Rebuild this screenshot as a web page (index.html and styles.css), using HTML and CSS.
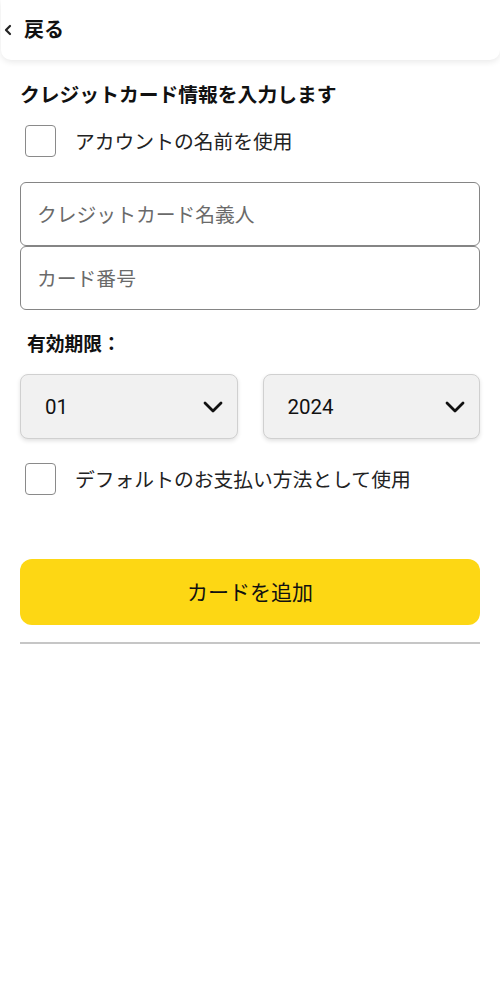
FILE: index.html
```html
<!DOCTYPE html>
<html lang="ja">
<head>
<meta charset="utf-8">
<link rel="stylesheet" href="styles.css">
</head>
<body>
<header class="topbar">
  <svg class="back-icon" width="8" height="12" viewBox="0 0 8 12"><path d="M6 2 L2 6 L6 10" fill="none" stroke="#222" stroke-width="2.2" stroke-linecap="round" stroke-linejoin="round"/></svg>
  <span class="back-text">戻る</span>
</header>
<main class="content">
  <h1 class="title">クレジットカード情報を入力します</h1>
  <label class="check-row">
    <span class="checkbox"></span>
    <span class="check-label">アカウントの名前を使用</span>
  </label>
  <div class="inputs">
    <div class="field">クレジットカード名義人</div>
    <div class="field field-second">カード番号</div>
  </div>
  <div class="subtitle">有効期限：</div>
  <div class="selects">
    <div class="select">
      <span class="select-value">01</span>
      <svg class="chev" width="20" height="12" viewBox="0 0 20 12"><path d="M2 2 L10 10 L18 2" fill="none" stroke="#111" stroke-width="2.8" stroke-linecap="round" stroke-linejoin="round"/></svg>
    </div>
    <div class="select">
      <span class="select-value">2024</span>
      <svg class="chev" width="20" height="12" viewBox="0 0 20 12"><path d="M2 2 L10 10 L18 2" fill="none" stroke="#111" stroke-width="2.8" stroke-linecap="round" stroke-linejoin="round"/></svg>
    </div>
  </div>
  <label class="check-row check-row-2">
    <span class="checkbox"></span>
    <span class="check-label">デフォルトのお支払い方法として使用</span>
  </label>
  <button class="add-btn">カードを追加</button>
  <div class="divider"></div>
</main>
</body>
</html>
```
FILE: styles.css
```css
html, body {
  margin: 0;
  padding: 0;
  background: #fff;
}
body {
  font-family: "Noto Sans CJK JP", "Noto Sans", sans-serif;
  color: #222;
}
.topbar {
  height: 60px;
  margin-left: 1px;
  background: #fff;
  border-radius: 0 0 10px 10px;
  box-shadow: 0 2px 6px rgba(0, 0, 0, 0.09);
  display: flex;
  align-items: center;
  padding-left: 3px;
  box-sizing: border-box;
}
.back-icon {
  display: block;
  margin-right: 12px;
}
.back-text {
  font-size: 20px;
  font-weight: 700;
  color: #111;
  line-height: 1;
  padding-bottom: 2px;
}
.content {
  padding: 0 20px;
}
.title {
  margin: 20px 0 0 0;
  font-size: 19.8px;
  line-height: 28px;
  font-weight: 700;
  color: #111;
}
.check-row {
  display: flex;
  align-items: center;
  margin-top: 17px;
  margin-left: 5px;
}
.checkbox {
  width: 31px;
  height: 32px;
  box-sizing: border-box;
  border: 1.5px solid #8a8a8a;
  border-radius: 4px;
  flex: none;
}
.check-label {
  margin-left: 19px;
  font-size: 19.8px;
  line-height: 28px;
  color: #222;
}
.inputs {
  margin-top: 25px;
}
.field {
  height: 64px;
  box-sizing: border-box;
  border: 1.5px solid #858585;
  border-radius: 6px;
  padding-left: 16px;
  display: flex;
  align-items: center;
  font-size: 19.8px;
  color: #6a6a6a;
  padding-bottom: 2px;
}
.field-second {
  margin-top: 0;
}
.subtitle {
  margin: 20px 0 0 7px;
  font-size: 18.8px;
  line-height: 26px;
  font-weight: 700;
  color: #111;
}
.selects {
  display: grid;
  grid-template-columns: 1fr 1fr;
  column-gap: 25px;
  margin-top: 18px;
}
.select {
  height: 65px;
  box-sizing: border-box;
  background: #f1f1f1;
  border: 1px solid #d0d0d0;
  border-radius: 8px;
  box-shadow: 0 2px 4px rgba(0, 0, 0, 0.12);
  display: flex;
  align-items: center;
  justify-content: space-between;
  padding: 0 14px 0 24px;
}
.select-value {
  font-family: Roboto, "Noto Sans", sans-serif;
  font-size: 20.5px;
  color: #111;
}
.chev {
  display: block;
}
.check-row-2 {
  margin-top: 24px;
}
.add-btn {
  display: block;
  width: 100%;
  height: 66px;
  margin-top: 64px;
  background: #fdd714;
  border: none;
  border-radius: 12px;
  font-family: "Noto Sans CJK JP", sans-serif;
  font-size: 21px;
  color: #111;
  padding: 0 0 2px 0;
}
.divider {
  margin-top: 17px;
  height: 2px;
  background: #c6c6c6;
}
```
